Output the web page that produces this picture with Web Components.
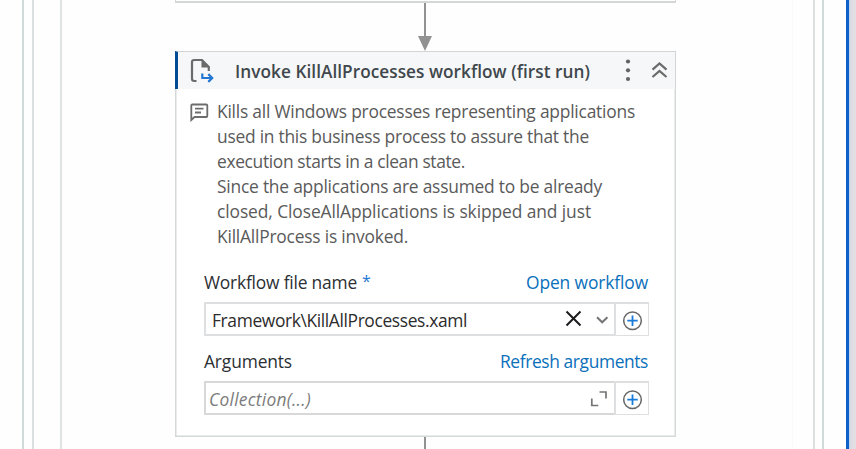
<!DOCTYPE html>
<html lang="en">
<head>
<meta charset="utf-8">
<title>Workflow designer</title>
<style>
html,body{margin:0;height:100%;overflow:hidden;background:#fff}
body{font-family:"Open Sans","Noto Sans",sans-serif;font-size:17.4px;color:#2b2f33}
</style>
</head>
<body>
<design-canvas>
  <previous-activity></previous-activity>
  <flow-arrow></flow-arrow>
  <activity-card>
    <fit-text slot="title" w="355">Invoke KillAllProcesses workflow (first run)</fit-text>
    <activity-note slot="note">
      <fit-text w="418">Kills all Windows processes representing applications</fit-text>
      <fit-text w="372">used in this business process to assure that the</fit-text>
      <fit-text w="248">execution starts in a clean state.</fit-text>
      <fit-text w="385">Since the applications are assumed to be already</fit-text>
      <fit-text w="374">closed, CloseAllApplications is skipped and just</fit-text>
      <fit-text w="191">KillAllProcess is invoked.</fit-text>
    </activity-note>
    <activity-field required>
      <fit-text slot="label" w="153">Workflow file name</fit-text>
      <fit-text slot="link" w="122">Open workflow</fit-text>
      <fit-text slot="value" w="255">Framework\KillAllProcesses.xaml</fit-text>
      <svg slot="tools" width="46" height="30" viewBox="0 0 46 30" fill="none"><path d="M3.500 7.500l14 14M17.500 7.500l-14 14" stroke="#1c1c1c" stroke-width="2"/><path d="M34 13.300l5.200 5 5.200-5" stroke="#757575" stroke-width="2"/></svg>
    </activity-field>
    <activity-field collection>
      <fit-text slot="label" w="88">Arguments</fit-text>
      <fit-text slot="link" w="148">Refresh arguments</fit-text>
      <fit-text slot="value" w="102">Collection(...)</fit-text>
      <svg slot="tools" width="24" height="32" viewBox="0 0 24 32" fill="none" stroke="#757575" stroke-width="1.700"><path d="M10.500 10h6.500v6.500M2.800 16.500v7h6.500"/></svg>
    </activity-field>
  </activity-card>
  <flow-line></flow-line>
</design-canvas>
<script>
const define=(name,html,init)=>customElements.define(name,class extends HTMLElement{
  constructor(){super();this.attachShadow({mode:'open'}).innerHTML=html;}
  connectedCallback(){if(init)init(this);}
});

define('design-canvas',`<style>
:host{display:flex;height:449px;width:856px;box-sizing:border-box;background:#fefefe}
.outer,.mid,.inner{box-sizing:border-box;height:100%}
.outer{margin-left:22px;width:802px;border:solid #d0dad9;border-width:0 2px;padding:0 7px 0 8px}
.mid{border:solid #dcdfe0;border-width:0 2px;padding:0 20px 0 26px}
.inner{border-left:2px solid #e0e3e3;border-right:1px solid #fafafa;padding-left:113px;display:flex;flex-direction:column;align-items:flex-start}
.edge{margin-left:22px;width:3px;background:#0c62c8}
.bar{flex:1;background:linear-gradient(90deg,#bfd3ea 0,#dddde4 2px,#e5dfe3)}
</style><div class="outer"><div class="mid"><div class="inner"><slot></slot></div></div></div><div class="edge"></div><div class="bar"></div>`);

define('previous-activity',`<style>:host{display:block;box-sizing:border-box;width:501px;height:3px;border:solid #d4d7d7;border-width:0 1.5px 2px;flex:none}</style>`);

define('flow-arrow',`<style>:host{display:block;width:500px;height:48px;flex:none}svg{display:block;margin:0 auto}</style>
<svg width="16" height="48" viewBox="0 0 16 48" fill="#929292"><path d="M7 0h2v34H7zM1 33h14L8 48z"/></svg>`);

define('flow-line',`<style>:host{display:flex;justify-content:center;width:500px;flex:1}i{width:2px;background:#929292}</style><i></i>`);

define('activity-card',`<style>
:host{display:block;box-sizing:border-box;width:501px;height:386px;flex:none;background:#fff;box-shadow:inset 0 0 0 1.5px #d5d8d9}
header{height:38px;box-sizing:border-box;background:#f6f7f8;border-left:3px solid #004b93;border-right:1.5px solid #d2d5d6;border-top:1.5px solid #d2d5d6;display:flex;align-items:center;font-weight:570;color:#3f474c;font-size:17.2px}
header svg{flex:none;display:block}
.t{margin-left:20px;flex:1;padding-top:2px}
.doc{margin-left:12px}
</style>
<header>
<svg class="doc" width="25" height="28" viewBox="0 0 25 28" fill="none"><path d="M6.500 24H4.200Q2 24 2 21.800V5.200Q2 3 4.200 3H12l6.800 7v4" stroke="#6b6b6b" stroke-width="2.200"/><path d="M11.500 2.500l7.800 7.900h-7.800z" fill="#6b6b6b"/><path d="M12.300 16.500v4.500h9M18.300 17.100l3.900 3.900-3.900 3.900" stroke="#2377d3" stroke-width="2.200"/></svg>
<div class="t"><slot name="title"></slot></div>
<svg width="60" height="30" viewBox="0 0 60 30" fill="none"><g fill="#646464"><circle cx="13" cy="5.500" r="2.100"/><circle cx="13" cy="14.300" r="2.100"/><circle cx="13" cy="23" r="2.100"/></g><path d="M37.500 13.600l7-6.100 7 6.100M37.500 21l7-6.100 7 6.100" stroke="#6a6a6a" stroke-width="2.200"/></svg>
</header><slot name="note"></slot><slot></slot>`);

define('activity-note',`<style>
:host{display:flex;padding:10px 0 0 14px;color:#5a5a5a;line-height:25px;height:159px}
svg{display:block;margin:4px 8px 0 1px;flex:none}
.copy{display:flex;flex-direction:column}
</style><svg width="19" height="19" viewBox="0 0 19 19" fill="none" stroke="#6c6c6c" stroke-width="1.8"><path d="M1.300 17V2.500Q1.300 1.500 2.300 1.500H16.300Q17.300 1.500 17.300 2.500V13Q17.300 14 16.300 14H4.500z"/><path d="M5 5.700h8.500M5 9.500h6"/></svg><div class="copy"><slot></slot></div>`);

define('activity-field',`<style>
:host{display:block;width:445px;height:79px;margin-left:29px}
.head{display:flex;justify-content:space-between;align-items:center;height:45px;padding-right:1px;box-sizing:border-box}
:host([required]) .head{margin-top:-1px}
.label{display:flex}
.star{display:none;color:#2377d3;margin-left:5px;font-size:16px}
:host([required]) .star{display:block}
.link{color:#0a70bb}
.head>*{padding-top:5px}
.row{display:flex;height:34px}
.box{box-sizing:border-box;flex:1;border:2px solid #dddfe0;border-right:0;display:flex;align-items:center;justify-content:space-between;padding:0 5px 0 6px;background:#fff;color:#2c2c2c}
.value{padding-top:1px}
.add{box-sizing:border-box;width:35px;border:solid #dddfe0;border-width:2px 1px 1px 2px;display:flex;align-items:center;justify-content:center}
.add svg{margin-top:1px}
:host([collection]) .box{padding:0 1px 0 3px;border-color:#d8d8d8}
:host([collection]) .value{font-style:italic;color:#7c7c7c;padding-top:1px}
</style>
<div class="head"><div class="label"><slot name="label"></slot><span class="star">*</span></div><div class="link"><slot name="link"></slot></div></div>
<div class="row"><div class="box"><div class="value"><slot name="value"></slot></div><slot name="tools"></slot></div>
<div class="add"><svg width="21" height="21" viewBox="0 0 21 21" fill="none"><circle cx="10.500" cy="10.700" r="8.800" stroke="#666" stroke-width="1.500"/><path d="M5.300 10.700h10.400M10.500 5.500v10.400" stroke="#197bd8" stroke-width="1.800"/></svg></div></div>`);

/* Tracks a single line of text so that it fills the width given in its w attribute. */
define('fit-text',`<style>:host{display:block;white-space:pre;font-stretch:94%}span{display:inline-block}</style><span><slot></slot></span>`,
 el=>{const s=el.shadowRoot.querySelector('span');
  el.style.width=el.getAttribute('w')+'px';
  s.style.letterSpacing=((+el.getAttribute('w')-s.getBoundingClientRect().width)/el.textContent.length)+'px';});
</script>
</body>
</html>
